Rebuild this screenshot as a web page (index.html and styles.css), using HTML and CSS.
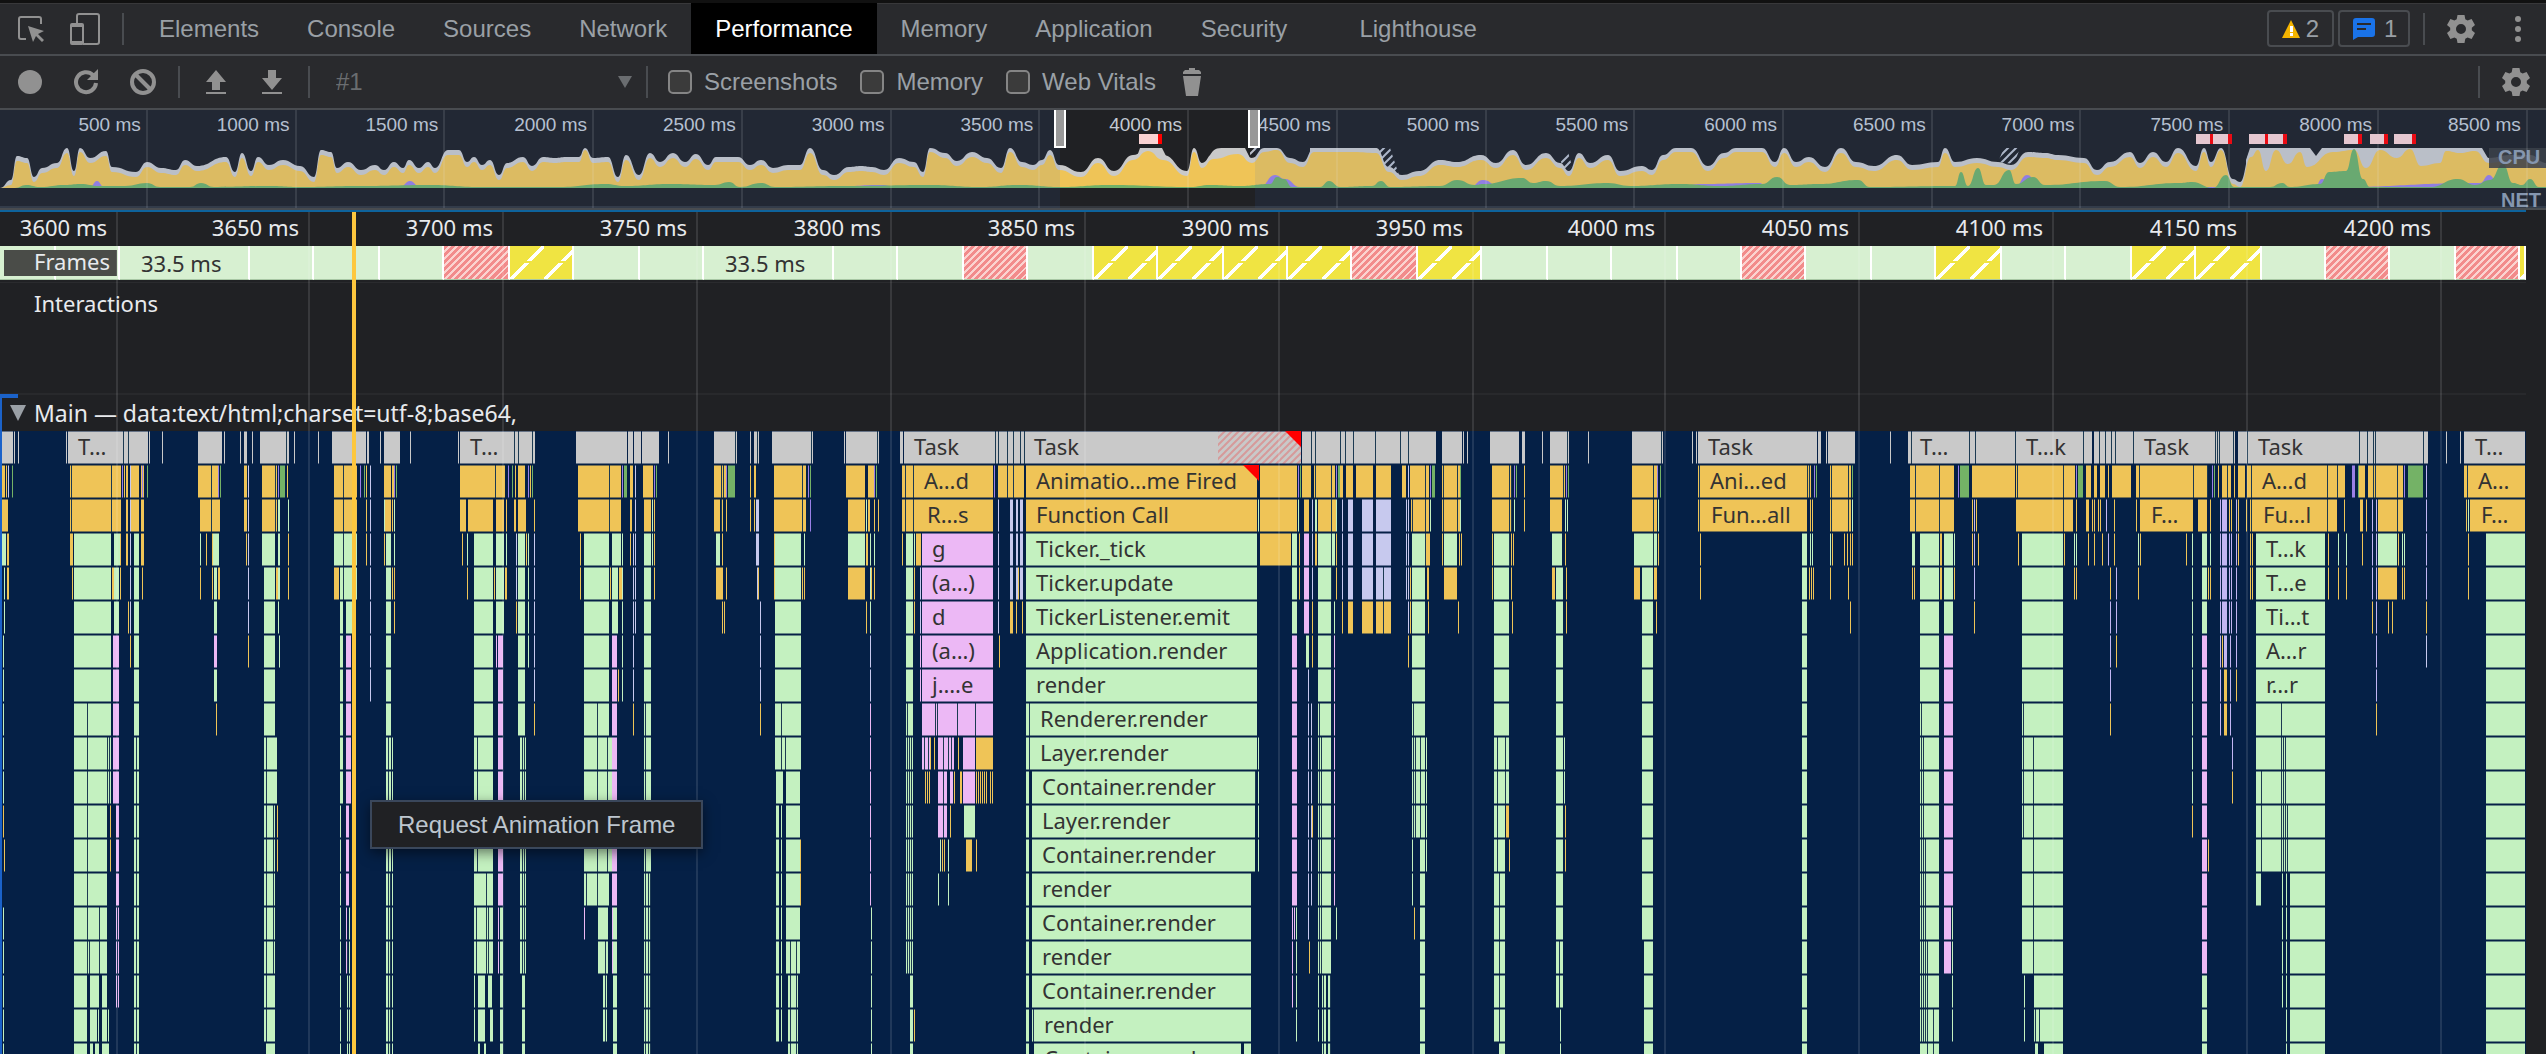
FILE: index.html
```html
<!DOCTYPE html>
<html lang="en">
<head>
<meta charset="utf-8">
<title>DevTools - Performance</title>
<link rel="stylesheet" href="styles.css">
</head>
<body>
<svg class="defs" aria-hidden="true">
  <symbol id="gear" viewBox="0 0 28 28"><path fill-rule="evenodd" d="M10.5 0h7l.8 4.2 2.3 1.3 4-1.4 3.4 6-3.2 2.7v2.4l3.2 2.7-3.4 6-4-1.4-2.3 1.3-.8 4.2h-7l-.8-4.2-2.3-1.3-4 1.4-3.4-6 3.2-2.7v-2.4L0 10.1l3.4-6 4 1.4 2.3-1.3zM14 9a5 5 0 1 0 0 10 5 5 0 0 0 0-10z"/></symbol>
  <pattern id="long" width="7" height="7" patternUnits="userSpaceOnUse"><rect width="7" height="7" fill="#c9c9c9"/><path d="M-1 8L8-1M-1 1L1-1M6 8L8 6" stroke="#d69a9a" stroke-width="2"/></pattern>
  <pattern id="idle" width="8" height="8" patternUnits="userSpaceOnUse"><path d="M-1 9L9-1M-1 1L1-1M7 9L9 7" stroke="#b9bfca" stroke-width="2"/></pattern>
</svg>

<header class="bar tabs-bar">
  <button class="icon" aria-label="Inspect"><svg width="26" height="26" viewBox="0 0 26 26"><path d="M23 8V3a2 2 0 0 0-2-2H3a2 2 0 0 0-2 2v18a2 2 0 0 0 2 2h5" fill="none" stroke="currentColor" stroke-width="2"/><path d="M10 10l16 5-6 3 6 6-2 2-6-6-3 6z"/></svg></button>
  <button class="icon device" aria-label="Device toolbar"><svg width="30" height="32" viewBox="0 0 30 32"><path d="M7 10V3a2 2 0 0 1 2-2h18a2 2 0 0 1 2 2v26a2 2 0 0 1-2 2H13" fill="none" stroke="currentColor" stroke-width="2"/><path fill-rule="evenodd" d="M2 10h10a2 2 0 0 1 2 2v18a2 2 0 0 1-2 2H2a2 2 0 0 1-2-2V12a2 2 0 0 1 2-2zM2 14v14h10V14z"/></svg></button>
  <span class="sep"></span>
  <nav class="tabs">
    <button>Elements</button><button>Console</button><button>Sources</button><button>Network</button><button class="active">Performance</button><button>Memory</button><button>Application</button><button>Security</button><button class="last">Lighthouse</button>
  </nav>
  <button class="badge"><svg width="18" height="18" viewBox="0 0 18 18"><path d="M9 0l9 18H0z" fill="#f4b400"/><path d="M8 6h3v6H8zM8 13h3v3H8z" fill="#fff"/></svg>2</button>
  <button class="badge issues"><svg width="22" height="22" viewBox="0 0 22 22"><path d="M3 0h16a3 3 0 0 1 3 3v13a3 3 0 0 1-3 3H5l-5 3V3a3 3 0 0 1 3-3z" fill="#1a73e8"/><path d="M4 6h14M4 11h9" stroke="#292a2d" stroke-width="2"/></svg>1</button>
  <span class="sep tight"></span>
  <button class="icon settings" aria-label="Settings"><svg width="28" height="28"><use href="#gear"/></svg></button>
  <button class="icon more" aria-label="More"><svg width="8" height="28" viewBox="0 0 8 28"><circle cx="4" cy="4" r="3"/><circle cx="4" cy="14" r="3"/><circle cx="4" cy="24" r="3"/></svg></button>
</header>

<div class="bar tools">
  <button class="icon" aria-label="Record"><svg width="24" height="24" viewBox="0 0 24 24"><circle cx="12" cy="12" r="12"/></svg></button>
  <button class="icon" aria-label="Reload"><svg width="24" height="26" viewBox="0 0 24 26"><path d="M22 14a10 10 0 1 1-3-8" fill="none" stroke="currentColor" stroke-width="4"/><path d="M24 0v11H13z"/></svg></button>
  <button class="icon" aria-label="Clear"><svg width="26" height="26" viewBox="0 0 26 26"><circle cx="13" cy="13" r="11" fill="none" stroke="currentColor" stroke-width="4"/><path d="M5 5l16 16" stroke="currentColor" stroke-width="4"/></svg></button>
  <span class="sep"></span>
  <button class="icon upload" aria-label="Load profile"><svg width="20" height="24" viewBox="0 0 20 24"><path d="M10 0l10 12h-6v8H6v-8H0zM0 22h20v2H0z"/></svg></button>
  <button class="icon download" aria-label="Save profile"><svg width="20" height="24" viewBox="0 0 20 24"><path d="M6 0h8v8h6L10 20 0 8h6zM0 22h20v2H0z"/></svg></button>
  <span class="sep"></span>
  <div class="history"><select aria-label="Recording" disabled><option>#1</option></select><svg width="14" height="12" viewBox="0 0 14 12"><path d="M0 0h14L7 12z"/></svg></div>
  <span class="sep"></span>
  <label><input type="checkbox">Screenshots</label>
  <label><input type="checkbox">Memory</label>
  <label><input type="checkbox">Web Vitals</label>
  <button class="icon trash" aria-label="Collect garbage"><svg width="18" height="28" viewBox="0 0 18 28"><path d="M0 6V4l2-2h4V0h6v2h4l2 2v2zM0 8h18l-3 20H3z"/></svg></button>
  <span class="sep end"></span>
  <button class="icon" aria-label="Capture settings"><svg width="28" height="28"><use href="#gear"/></svg></button>
</div>

<section class="overview" id="overview">
  <svg class="cpu" id="cpu" viewBox="0 0 2546 40" preserveAspectRatio="none"></svg>
  <span class="tag cpu-tag">CPU</span>
  <span class="tag net-tag">NET</span>
</section>

<main class="timeline" id="timeline">
  <div class="ruler"></div>
  <div class="frames" id="frames"></div>
  <div class="interactions">Interactions</div>
  <div class="main-head"><svg width="16" height="16" viewBox="0 0 16 16"><path d="M0 0h16L8 16z"/></svg>Main — data:text/html;charset=utf-8;base64,</div>
  <svg class="flame" id="flame"></svg>
  <span class="frames-tag">Frames</span>
  <span class="edge"></span>
  <span class="marker"></span>
</main>

<div class="menu" role="menu"><button role="menuitem">Request Animation Frame</button></div>
<script src="chart.js"></script>
</body>
</html>
```

FILE: styles.css
```css
* { box-sizing: border-box; }
body {
  margin: 0; height: 100vh; overflow: hidden; display: flex; flex-direction: column;
  background: #202124; color: #9aa0a6; font: 24px/28px "Liberation Sans", Arial, sans-serif;
}
button, select { font: inherit; color: inherit; background: none; border: 0; padding: 0; margin: 0; }
svg { display: block; fill: currentColor; flex: none; }
.defs { position: absolute; width: 0; height: 0; }

.bar { flex: none; display: flex; align-items: center; background: #292a2d; border-bottom: 2px solid #494c50; }
.tabs-bar { height: 56px; border-top: 3px solid #111; padding: 0 24px 0 18px; box-shadow: inset 0 1px #38383a; }
.tools { height: 54px; padding: 0 16px 0 18px; }
.icon { color: #919191; }
.sep { flex: none; width: 2px; height: 32px; background: #494c50; }
.device { margin: 0 22px 0 26px; }
.tabs { display: flex; align-self: stretch; flex: 1; margin-left: 11px; }
.tabs button { padding: 0 24px; }
.tabs .active { background: #000; color: #fff; }
.tabs .last { margin-left: 24px; }
.badge { display: flex; align-items: center; gap: 6px; height: 37px; padding: 0 13px; border: 2px solid #494c50; border-radius: 4px; }
.issues { margin-left: 4px; padding: 0 13px; gap: 9px; }
.tight { margin: 0 22px 0 13px; }
.more { margin-left: 39px; }
.badge + .badge { width: 72px; }

.tools > .icon + .icon { margin-left: 32px; }
.tools > .sep { margin-left: 22px; margin-right: 26px; }
.tools > .download.icon { margin-left: 36px; margin-right: 4px; }
.history { width: 296px; display: flex; align-items: center; justify-content: space-between; color: #6a6d70; }
.history select { appearance: none; color: #6a6d70; opacity: 1; }
.tools > .history + .sep { margin: 0 20px 0 14px; }
label { display: flex; align-items: center; gap: 12px; margin-right: 23px; }
input[type=checkbox] { appearance: none; width: 24px; height: 24px; margin: 0; border: 2px solid #858585; border-radius: 5px; background: #3b3b3b; }
.tools > .trash { margin-left: 4px; }
.tools > .sep.end { margin: 0 22px 0 auto; }
.tools > .sep.end + .icon { margin-left: 0; }

.overview { position: relative; flex: none; height: 100px; border-bottom: 2px solid #494c50; box-shadow: inset 0 -2px #33373d; font-size: 19px; line-height: 30px; color: #c3cad3; overflow: hidden; }
.tick { position: absolute; top: 0; bottom: 0; width: 148px; border-right: 2px solid rgba(255,255,255,.11); text-align: right; padding-right: 5px; transform: translateX(-100%); }
.cpu { position: absolute; left: 0; top: 38px; width: 100%; height: 40px; }
.shade { position: absolute; top: 0; bottom: 0; background: rgba(62,110,196,.1); }
.handle { position: absolute; top: -2px; width: 12px; height: 40px; border: 2px solid #fff; background: #999; }
.long { position: absolute; top: 24px; height: 10px; background: #f9d2d2; border-right: 4px solid #f00; }
.tag { position: absolute; right: 0; font-size: 20px; font-weight: 700; color: #8e9bad; }
.cpu-tag { top: 38px; height: 20px; line-height: 18px; width: 57px; padding-left: 9px; background: rgba(60,60,60,.85); }
.net-tag { top: 82px; line-height: 16px; width: 45px; }

.timeline { position: relative; flex: 1; min-height: 0; margin-right: 20px; border-top: 2px solid #0e639c; color: #e8eaed; font: 22px/28px "Noto Sans", sans-serif; display: flex; flex-direction: column; overflow: hidden; }
.ruler { flex: none; height: 34px; }
.timeline .tick { line-height: 30px; width: 194px; padding-right: 9px; border-color: rgba(255,255,255,.11); z-index: 1; }
.frames { flex: none; display: flex; height: 34px; background: #fff; }
.frame { border-right: 2px solid #fff; border-bottom: 1px solid #a8c7a4; background: #d7f0d1; color: #333; padding-left: 21px; line-height: 34px; }
.frame.drop { background: repeating-linear-gradient(135deg, #f28b8b 0 3px, #fbd3d0 3px 5px); }
.frame.part { background: linear-gradient(transparent 0 44%, #f0e442 44% 52%, transparent 52%), linear-gradient(135deg, #f0e442 0 46%, #fff 46% 54%, #f0e442 54%) 0 0 / 34px 34px; }
.frames-tag { position: absolute; left: 4px; top: 38px; height: 26px; width: 113px; padding-left: 30px; line-height: 22px; background: #4a4c48; }
.interactions { flex: none; height: 113px; margin-top: 2px; padding: 6px 0 0 34px; border-top: 1px solid #2a2b2e; border-bottom: 2px solid #28292c; }
.main-head { flex: none; height: 36px; display: flex; align-items: center; gap: 8px; padding-left: 10px; font-size: 23px; }
.main-head svg { color: #9aa0a6; }
.flame { width: 100%; height: 646px; background: #052046; }
.flame text { fill: #333; }
.edge { position: absolute; left: 0; top: 182px; bottom: 0; width: 2px; background: #1b62c9; }
.edge::before { content: ""; position: absolute; left: 0; top: 0; width: 18px; height: 4px; background: #1b62c9; }
.marker { position: absolute; left: 352px; top: 0; bottom: 0; width: 4px; background: #fdc73e; z-index: 2; }

.menu { position: absolute; left: 370px; top: 800px; padding: 8px 26px; border: 2px solid #3a475b; background: #202124; color: #bdc6cf; box-shadow: 0 4px 12px rgba(0,0,0,.5); z-index: 3; }
.menu button { display: block; height: 29px; }
```

FILE: chart.js
```js
const SVG = 'http://www.w3.org/2000/svg';
const SPAN = 2526, OVERVIEW = 2546, ROW = 34;
const pct = (v, total) => v / total * 100 + '%';

function el(parent, cls, left, text) {
  const node = document.createElement('span');
  node.className = cls;
  node.style.left = left;
  if (text) node.textContent = text;
  parent.append(node);
  return node;
}
function shape(parent, name, attrs, text) {
  const node = document.createElementNS(SVG, name);
  for (const k in attrs) node.setAttribute(k, attrs[k]);
  if (text) node.textContent = text;
  parent.append(node);
  return node;
}

/* Overview: CPU usage as "position height" samples, 40 is full load */
const busy = `0 0 11 3 17 27 27 25 34 6 42 15 57 20 67 35 74 12 80 36 90 25 106 32 112 16 136 11 147 21 161 15 176 13 185 23 197 17 226 26 235 11 242 30 251 12 258 26 269 18 283 23 300 17 314 6 321 33 331 31 337 15 348 21 361 13 375 18 384 13 394 21 403 15 409 23 419 15 428 21 435 15 448 33 459 33 467 21 474 26 482 18 490 23 499 8 507 20 523 26 532 17 543 26 555 25 566 26 579 26 585 38 593 25 608 26 618 6 626 28 639 8 650 30 660 21 673 30 685 21 696 29 708 18 716 26 738 26 750 18 761 23 773 15 788 18 800 18 810 35 823 13 834 8 849 16 861 17 872 16 884 13 899 25 914 21 923 11 930 36 945 30 957 22 972 31 987 25 1001 15 1010 36 1022 21 1033 18 1042 23 1050 33 1059 18 1081 11 1098 25 1114 12 1133 28 1148 37 1163 28 1187 12 1194 36 1202 20 1213 29 1238 34 1252 25 1264 36 1277 38 1290 25 1303 21 1314 36 1354 36 1376 35 1389 16 1402 8 1419 12 1440 23 1457 21 1481 28 1496 20 1513 33 1526 18 1546 30 1560 20 1569 12 1579 30 1590 20 1608 28 1620 12 1642 17 1652 13 1663 28 1676 36 1691 36 1708 17 1724 30 1736 36 1762 36 1775 21 1784 35 1796 21 1809 26 1825 16 1841 35 1856 21 1874 17 1897 28 1912 18 1938 21 1945 35 1955 21 1977 25 1998 21 2011 18 2028 31 2045 30 2058 28 2084 25 2097 13 2110 21 2130 31 2140 20 2153 31 2166 21 2178 35 2196 17 2204 36 2211 21 2221 38 2233 4 2240 1 2251 31 2258 38 2266 17 2276 38 2288 24 2300 36 2307 21 2333 36 2354 38 2366 20 2380 38 2397 30 2410 39 2421 22 2440 25 2446 37 2460 35 2475 37 2489 25 2510 28 2530 28 2546 20`;
const paint = `0 0 15 0 26 3 40 1 65 3 80 4 100 2 125 2 147 5 160 1 190 1 201 5 214 1 270 2 300 1 360 2 430 3 480 1 560 1 605 4 625 2 670 4 715 3 729 6 740 1 761 5 775 1 845 2 930 3 980 1 1020 3 1060 1 1110 3 1190 1 1210 3 1240 2 1270 4 1277 11 1284 9 1292 1 1320 1 1329 7 1340 1 1372 2 1381 7 1390 1 1440 2 1457 8 1475 3 1483 4 1522 10 1533 5 1546 7 1560 2 1608 5 1630 2 1680 4 1720 2 1762 4 1777 11 1790 3 1820 4 1858 8 1870 1 1955 2 1961 16 1968 2 1978 20 1986 3 1994 3 2009 18 2016 4 2033 11 2045 3 2105 7 2120 1 2180 5 2192 6 2213 0 2226 13 2234 1 2270 1 2282 5 2290 1 2320 4 2329 16 2346 17 2354 39 2363 9 2370 1 2430 1 2458 9 2475 3 2490 8 2503 24 2513 5 2522 3 2530 9 2539 1 2546 1`;
const script = `0 0 90 1 97 7 104 1 400 1 410 7 420 1 830 1 880 3 900 1 1260 1 1275 13 1285 9 1300 1 1470 1 1483 8 1500 1 1680 1 1700 4 1760 5 1766 0 2015 1 2027 13 2040 1 2315 1 2322 9 2335 1 2480 5 2489 13 2500 1 2546 1`;

function area(samples, lift) {
  const v = samples.split(' ').map(Number);
  const y = i => 40 - Math.min(40, v[i] ? v[i] + lift : 0);
  let d = `M0 40L${v[0]} ${y(1)}`;
  for (let i = 2; i < v.length; i += 2) {
    const mid = (v[i] + v[i - 2]) / 2;
    d += `C${mid} ${y(i - 1)} ${mid} ${y(i + 1)} ${v[i]} ${y(i + 1)}`;
  }
  return d + 'V40Z';
}
const cpu = document.getElementById('cpu');
const overview = document.getElementById('overview');
shape(cpu, 'path', { d: 'M1372 24V0H1390L1400 30 1390 26ZM1250 6V0H1257L1252 12ZM1560 12L1568 4 1572 18 1566 24ZM1998 14L2004 0H2020L2014 16Z', fill: 'url(#idle)' });
shape(cpu, 'path', { d: area(busy, 5), fill: '#c9c9c9' });
shape(cpu, 'path', { d: 'M1209 40V9C1214 0 1216 0 1224 0H1245L1250 10V40ZM1133 20L1140 0H1162L1170 16ZM1310 0H1370V20H1310ZM2246 12L2250 0H2310L2316 8 2322 0H2482L2489 12V30H2246Z', fill: '#c9c9c9' });
shape(cpu, 'path', { d: area(busy, 0), fill: '#efc457' });
shape(cpu, 'path', { d: area(script, 0), fill: '#9a80e6' });
shape(cpu, 'path', { d: area(paint, 0), fill: '#6fb068' });

for (let i = 1; i <= 17; i++) {
  el(overview, 'tick', pct(i * 148.75 - 1, OVERVIEW), i * 500 + ' ms');
}
for (const [a, b] of [[1139, 1162], [2196, 2214], [2213, 2232], [2249, 2269], [2268, 2287], [2344, 2362], [2370, 2388], [2394, 2416]]) {
  el(overview, 'long', pct(a, OVERVIEW)).style.width = pct(b - a, OVERVIEW);
}
el(overview, 'shade', 0).style.width = pct(1060, OVERVIEW);
el(overview, 'shade', pct(1255, OVERVIEW)).style.right = 0;
el(overview, 'handle', pct(1054, OVERVIEW));
el(overview, 'handle', pct(1248, OVERVIEW));

/* Detail ruler */
const timeline = document.getElementById('timeline');
[118, 310, 504, 698, 892, 1086, 1280, 1474, 1666, 1860, 2054, 2248, 2442].forEach((x, i) =>
  el(timeline, 'tick', pct(x, SPAN), 3600 + i * 50 + ' ms'));

/* Frames: end position, kind (d = dropped, p = partial), label */
const frames = [[56], [120], [250, '', '33.5 ms'], [314], [380], [444], [510, 'd'], [574, 'p'], [640], [704], [834, '', '33.5 ms'], [898], [964], [1028, 'd'], [1094], [1158, 'p'], [1224, 'p'], [1288, 'p'], [1352, 'p'], [1418, 'd'], [1482, 'p'], [1548], [1612], [1678], [1742], [1806, 'd'], [1872], [1936], [2002, 'p'], [2066], [2132], [2196, 'p'], [2262, 'p'], [2326], [2390, 'd'], [2456], [2520, 'd'], [2526, 'p']];
let start = 0;
for (const [end, kind, label] of frames) {
  const f = document.createElement('div');
  f.className = 'frame' + (kind === 'd' ? ' drop' : kind === 'p' ? ' part' : '');
  f.style.width = pct(end - start, SPAN);
  if (label) f.textContent = label; else f.style.padding = 0;
  document.getElementById('frames').append(f);
  start = end;
}

/* Flame chart. Each entry: x, width, first row, last row */
const bars = {
  '#c9c9c9': `2 11 0 0,14 1 0 0,18 1 0 0,66 1 0 0,68 80 0 0,149 1 0 0,162 1 0 0,198 24 0 0,224 1 0 0,240 1 0 0,244 3 0 0,252 1 0 0,260 29 0 0,294 1 0 0,318 1 0 0,332 34 0 0,367 2 0 0,380 1 0 0,384 16 0 0,410 1 0 0,458 1 0 0,460 75 0 0,576 51 0 0,628 5 0 0,634 7 0 0,642 17 0 0,668 1 0 0,714 23 0 0,750 1 0 0,754 5 0 0,772 41 0 0,844 1 0 0,846 33 0 0,900 3 0 0,904 122 0 0,1026 192 0 0,1302 134 0 0,1442 20 0 0,1463 1 0 0,1467 1 0 0,1490 29 0 0,1522 3 0 0,1542 1 0 0,1550 19 0 0,1588 1 0 0,1632 31 0 0,1692 1 0 0,1696 1 0 0,1698 119 0 0,1818 3 0 0,1826 1 0 0,1828 27 0 0,1890 1 0 0,1908 184 0 0,2094 141 0 0,2238 190 0 0,2446 1 0 0,2460 1 0 0,2464 61 0 0`,
  '#efc457': `2 3 1 1,6 1 1 1,2 6 2 2,7 2 3 4,70 51 1 2,124 1 1 1,126 2 1 3,131 8 1 2,141 3 1 3,70 3 3 3,72 1 4 4,112 2 4 4,120 1 3 4,128 1 5 5,142 1 4 4,130 1 6 6,110 1 11 12,3 1 11 11,4 1 12 12,198 20 1 1,200 20 2 2,206 1 3 3,212 1 3 4,218 2 4 4,200 1 4 4,216 1 8 8,244 3 1 2,246 1 3 3,248 1 6 6,262 15 1 1,287 1 1 1,262 15 2 2,288 1 3 4,276 2 4 4,277 1 11 12,334 23 1 2,334 5 4 4,366 1 1 3,384 7 1 1,392 2 1 1,385 6 2 2,392 1 2 2,384 1 3 3,392 1 4 4,394 1 4 5,392 1 11 13,460 45 1 1,460 6 2 2,468 25 2 2,496 8 2 2,506 1 2 2,515 1 1 1,518 7 1 1,514 2 2 2,518 8 2 2,534 1 2 2,530 1 1 1,526 1 3 3,462 1 3 3,467 1 4 4,494 1 4 4,505 2 4 4,516 1 5 5,534 1 8 8,578 43 1 2,630 3 1 1,630 2 2 2,580 1 3 4,610 1 4 4,619 3 4 4,630 1 3 3,618 1 7 7,611 1 12 12,633 1 8 8,643 10 1 1,644 7 2 2,654 1 2 4,714 12 1 1,714 6 2 2,722 1 2 5,726 1 2 2,726 1 4 4,716 6 4 4,750 1 1 2,754 2 1 1,754 1 2 2,758 1 4 4,760 1 8 8,724 1 5 5,774 32 1 1,774 32 2 2,774 1 3 4,802 1 4 4,804 1 4 4,800 1 12 13,846 19 1 1,868 6 1 1,848 17 2 2,868 2 2 2,874 1 2 2,878 1 2 2,866 2 3 3,848 17 4 4,871 1 4 4,874 1 4 4,866 1 5 5,902 91 1 1,998 26 1 1,902 91 2 2,902 1 3 3,916 5 3 3,914 1 4 5,1026 231 1 2,1260 37 1 2,1260 31 3 3,1018 1 4 4,1010 3 5 5,1016 1 5 5,1022 1 5 5,999 1 6 6,914 1 17 17,930 1 9 9,934 1 9 9,958 1 9 9,976 17 9 9,925 1 10 10,927 1 10 10,929 1 10 10,954 1 10 10,960 2 10 10,976 1 10 10,978 1 10 10,980 1 10 10,982 1 10 10,984 1 10 10,986 1 10 10,990 1 10 10,992 1 10 10,950 1 11 11,942 1 12 12,944 1 12 12,966 6 12 12,976 1 12 12,1299 1 3 4,1302 9 1 1,1314 21 1 1,1340 3 1 1,1346 7 1 1,1356 17 1 1,1376 15 1 1,1402 4 1 1,1410 19 1 1,1304 5 2 2,1312 1 2 2,1318 18 2 2,1315 2 3 3,1336 1 3 4,1348 5 5 5,1342 1 5 5,1362 11 5 5,1376 15 5 5,1312 1 5 6,1411 18 2 2,1426 4 3 3,1427 2 4 4,1428 1 5 5,1410 1 4 5,1408 1 6 6,1312 1 11 11,1309 1 15 15,1416 3 11 11,1414 1 14 14,1442 18 1 2,1442 1 3 3,1459 1 3 3,1461 1 3 3,1444 13 4 4,1458 1 5 5,1492 20 1 2,1492 1 3 4,1511 1 3 3,1513 1 3 3,1511 1 4 4,1512 1 5 5,1524 1 1 2,1506 3 11 11,1509 1 12 12,1550 15 1 1,1550 12 2 2,1565 1 3 3,1552 3 4 4,1566 1 4 5,1565 1 11 12,1632 25 1 1,1632 25 2 2,1658 1 3 3,1634 6 4 4,1654 3 4 4,1656 1 5 5,1698 113 1 1,1698 109 2 2,1810 1 2 2,1812 1 2 2,1700 1 3 4,1809 1 4 4,1811 1 4 4,1813 1 4 4,1830 21 1 2,1832 1 3 3,1844 1 3 3,1847 1 3 3,1850 1 3 3,1852 1 3 3,1830 1 4 4,1848 1 4 4,1850 1 5 5,1910 44 1 2,1972 43 1 1,2016 59 1 1,2086 5 1 1,2094 3 1 1,2100 5 1 1,2108 1 1 1,2112 19 1 1,2136 71 1 1,2218 1 1 1,2222 9 1 1,2234 1 1 1,2238 7 1 1,2247 98 1 1,2359 6 1 1,2368 35 1 1,2464 61 1 1,1940 2 3 4,1954 1 4 4,1912 1 4 4,1914 1 4 4,1972 1 2 3,1976 1 2 2,1978 1 3 3,1974 1 5 5,2016 57 2 2,2076 1 2 2,2086 3 2 2,2092 1 2 2,2094 1 2 3,2098 1 2 2,2100 1 2 2,2106 1 2 2,2114 1 2 3,2136 1 2 2,2140 53 2 2,2198 9 2 2,2210 1 2 2,2229 1 2 2,2231 1 2 2,2238 1 2 3,2246 1 2 2,2250 87 2 2,2344 1 2 2,2360 3 2 2,2366 1 2 2,2378 25 2 2,2466 1 2 2,2470 55 2 2,2018 1 3 3,2064 1 3 3,2088 1 3 3,2102 1 3 3,2140 1 3 3,2138 1 4 4,2186 1 3 3,2250 1 3 4,2252 1 3 4,2328 1 3 4,2338 1 4 4,2346 1 4 4,2362 1 3 3,2398 1 3 3,2378 19 4 4,2402 1 4 4,2404 1 4 4,2468 1 3 4,2074 1 4 4,2076 1 4 4,2110 1 4 4,2192 1 4 4,2208 1 4 4,2210 1 4 4,2222 1 5 6,2372 1 5 5,2388 1 5 5,2392 1 5 5,2426 1 5 5,1922 1 11 11,1924 1 11 11,2116 1 6 6,2110 1 8 8,2192 1 11 11,2208 1 12 12,2224 3 7 8,2236 1 7 7,2232 1 10 10,2376 1 8 8`,
  '#c4f1c0': `2 4 3 3,4 1 4 5,3 1 6 10,3 1 14 18,74 37 3 10,74 33 11 15,74 13 16 18,90 9 16 16,90 7 17 17,98 1 17 17,90 3 18 18,95 4 18 18,102 5 16 17,108 1 17 17,102 7 18 18,114 6 3 3,114 5 4 5,134 5 3 18,200 1 3 3,213 6 3 3,214 3 4 5,214 3 7 7,262 13 3 3,264 11 4 17,266 9 18 18,278 2 2 4,278 1 5 5,288 1 2 2,279 1 6 6,275 2 9 10,334 23 3 3,340 17 4 4,340 3 5 10,346 6 5 5,340 1 11 18,349 1 14 18,347 1 16 18,384 1 2 2,394 1 2 3,386 5 3 18,392 1 9 18,467 1 3 3,474 19 3 15,496 8 3 5,506 1 3 3,518 7 3 5,528 1 3 6,518 7 6 8,520 6 9 15,522 3 16 18,500 3 14 18,584 25 3 13,609 3 9 12,612 9 3 3,612 6 4 5,622 1 3 7,598 10 14 15,603 4 16 17,613 4 14 18,644 7 3 18,652 1 2 3,716 4 3 3,775 26 3 9,804 1 3 3,776 7 10 10,786 14 10 15,776 3 11 17,781 1 10 17,788 10 16 18,848 17 3 3,866 1 2 2,870 1 3 5,874 1 3 3,906 7 3 15,910 3 16 18,871 1 14 18,914 1 3 3,474 1 16 17,478 7 16 17,488 4 16 16,490 3 17 17,478 2 18 18,484 2 18 18,938 1 13 13,948 1 12 13,946 1 11 11,942 1 9 9,940 1 12 12,952 1 10 10,964 11 11 11,1026 231 3 6,1026 231 7 9,1026 3 10 18,1032 223 10 12,1258 1 9 12,1032 219 13 17,1034 207 18 18,1244 7 18 18,1258 1 2 2,1292 5 3 5,1296 1 14 17,1298 1 2 2,1306 3 6 6,1315 2 2 2,1318 13 3 15,1332 3 3 3,1334 1 5 5,1336 1 2 2,1318 1 16 17,1322 4 16 18,1328 3 16 18,1336 1 14 14,1412 13 3 11,1426 1 9 12,1412 1 12 13,1420 5 12 18,1430 1 2 2,1444 13 3 3,1460 1 2 2,1494 15 3 10,1494 11 11 17,1499 6 18 18,1514 1 2 2,1552 10 3 3,1556 7 4 16,1560 1 17 18,1564 1 9 10,1565 1 2 2,1567 1 2 2,1634 19 3 3,1642 11 4 14,1644 9 15 18,1654 3 3 3,1658 1 2 2,1802 5 3 18,1810 1 3 3,1812 1 3 3,1830 1 3 3,1852 1 2 2,1912 3 3 3,1920 19 3 18,1944 9 3 5,1954 1 3 3,1952 1 14 17,2022 41 3 15,2024 1 16 17,2034 29 16 17,2044 19 18 18,2035 3 18 18,2074 1 3 3,2076 1 3 3,2138 1 3 3,2192 1 3 10,2202 5 3 5,2210 1 3 3,2202 5 16 18,2256 69 3 12,2256 5 13 13,2282 1 13 16,2286 1 13 18,2290 35 13 18,2338 1 3 3,2346 1 3 3,2378 19 3 3,2402 1 3 3,2404 1 3 3,2468 1 2 2,2486 39 3 18`,
  '#ecb8f5': `113 6 6 10,116 3 11 13,116 1 14 16,118 1 14 16,214 3 6 6,346 5 6 10,346 3 11 13,346 1 14 15,496 1 6 6,498 5 6 13,498 1 14 15,612 5 6 13,584 1 14 14,612 1 14 15,922 71 3 8,870 1 8 13,920 1 5 7,922 8 9 9,938 16 9 9,963 12 9 10,938 9 10 11,950 3 10 10,1304 5 3 5,1292 5 6 13,1292 1 14 16,1294 1 14 14,1334 1 6 13,1944 9 6 13,1944 7 14 15,2202 5 6 15`,
  '#c7c9ee': `8 1 1 1,130 1 1 5,248 1 1 5,370 1 1 7,534 1 3 7,516 1 3 4,635 1 1 5,633 1 3 7,756 3 2 3,757 1 4 4,760 1 5 7,870 1 6 7,998 1 2 5,1010 3 2 4,1016 2 2 4,1020 3 2 4,920 1 4 5,1312 1 2 4,1342 1 2 4,1348 5 2 4,1362 11 2 4,1376 15 2 4,1406 1 2 4,1408 1 1 5,1308 1 7 14,1311 1 8 13,2426 1 6 6`,
  '#c2b5f2': `2220 1 2 5,2222 5 2 5,2229 1 3 5,2231 1 3 5,2236 1 2 6,2224 3 6 6,2220 1 6 8,2230 1 6 8,2232 1 9 9,2110 1 5 7,2116 1 4 5,2106 1 2 2,2108 1 3 3,1974 1 2 4,2372 1 2 4,2376 1 2 7,2426 1 1 4`,
  '#9a80e6': `122 1 1 1,142 1 1 1,218 1 1 1,278 1 1 1,360 1 1 1,394 1 1 1,508 1 1 1,528 1 1 1,622 1 1 1,654 1 1 1,726 1 1 1,808 1 1 1,810 1 2 2,874 1 1 1,994 1 1 1,1298 1 1 1,1336 1 1 1,1430 1 1 1,1514 1 1 1,1566 1 1 1,1657 1 1 1,1814 1 1 1,1958 1 1 1,2076 1 1 1,2212 1 1 1,2352 3 1 1,2404 1 1 1`,
  '#74b266': `12 1 1 1,147 1 1 1,220 1 1 1,280 5 1 1,364 1 1 1,396 1 1 1,512 1 1 1,532 1 1 1,624 3 1 1,656 1 1 1,728 7 1 1,810 1 1 1,876 1 1 1,1300 1 1 1,1338 2 1 1,1432 3 1 1,1460 1 1 1,1516 1 1 1,1568 1 1 1,1660 1 1 1,1816 1 1 1,1852 1 1 1,1960 9 1 1,2078 5 1 1,2214 1 1 1,2358 1 1 1,2408 15 1 1`
};
/* Hairlines between neighbouring calls: x, first row, last row */
const cuts = `123 0 0,128 0 0,286 0 0,514 0 0,518 0 0,532 0 0,71 1 2,111 1 2,211 1 1,211 2 2,275 1 2,343 1 4,495 1 1,609 1 2,721 1 2,723 1 1,735 0 0,757 0 0,802 1 2,811 0 0,877 0 0,995 0 0,998 0 0,1007 0 1,1013 0 1,1020 0 0,1024 0 0,905 1 2,913 1 2,1311 0 0,1315 0 1,1340 0 0,1345 0 0,1353 0 0,1375 0 0,1400 0 0,1408 0 0,1331 1 4,1425 1 3,1412 2 2,1383 4 5,1443 1 2,1457 1 2,1509 1 3,1511 1 2,1563 1 1,1567 0 0,1661 0 0,1653 1 3,1699 1 2,1807 1 1,1809 1 1,1831 1 2,1848 1 2,1911 0 0,1915 1 2,1939 1 2,1969 0 0,1975 0 0,2015 0 0,2017 1 1,2063 1 2,2083 0 0,2099 0 0,2105 0 0,2111 0 0,2115 0 0,2133 0 0,2139 1 1,2193 1 1,2207 1 1,2215 0 0,2217 0 0,2219 0 0,2233 0 0,2227 1 1,2247 0 0,2251 1 2,2327 1 2,2337 1 1,2359 0 0,2367 0 0,2373 0 1,2375 0 1,2423 0 0,2397 1 2,2467 1 1,
87 8 15,107 9 10,109 9 10,99 14 15,89 15 15,136 9 18,266 9 17,273 11 15,347 15 15,388 9 18,390 13 18,477 9 12,486 13 15,476 14 15,488 14 15,522 9 15,524 9 15,597 8 13,607 9 12,586 13 13,605 15 17,645 8 18,648 13 18,650 13 18,781 8 9,785 9 9,790 15 18,796 15 18,909 9 15,911 9 15,907 8 15,935 8 8,937 8 8,957 8 8,975 8 8,924 9 9,928 9 9,943 9 11,948 9 9,951 9 9,1029 8 9,1033 17 17,1255 10 10,1319 8 15,1321 9 15,1323 16 18,1330 16 18,1413 8 11,1415 9 11,1420 9 11,1497 9 12,1505 9 10,1499 13 17,1559 15 16,1921 8 17,1923 9 17,1925 12 17,1927 15 18,1933 17 18,2023 8 11,2033 9 15,2035 17 17,2039 17 17,2281 8 12,2283 9 12,2285 9 12,2287 11 12,2261 10 12`;
const labels = `0|78|T…;0|470|T…;0|914|Task;0|1034|Task;0|1708|Task;0|1920|T…;0|2026|T…k;0|2144|Task;0|2258|Task;0|2475|T…;1|924|A…d;1|1036|Animatio…me Fired;1|1710|Ani…ed;1|2262|A…d;1|2478|A…;2|927|R…s;2|1036|Function Call;2|1711|Fun…all;2|2151|F…;2|2263|Fu…l;2|2481|F…;3|932|g;3|1036|Ticker._tick;3|2266|T…k;4|932|(a…);4|1036|Ticker.update;4|2266|T…e;5|932|d;5|1036|TickerListener.emit;5|2266|Ti…t;6|932|(a…);6|1036|Application.render;6|2266|A…r;7|932|j.…e;7|1036|render;7|2266|r…r;8|1040|Renderer.render;9|1040|Layer.render;10|1042|Container.render;11|1042|Layer.render;12|1042|Container.render;13|1042|render;14|1042|Container.render;15|1042|render;16|1042|Container.render;17|1044|render;18|1044|Container.render`;

const flame = document.getElementById('flame');
function rect(x, w, y, h, fill) {
  shape(flame, 'rect', { x: pct(x, SPAN), width: pct(w, SPAN), y, height: h, fill, 'shape-rendering': 'crispEdges' });
}
for (const fill in bars) {
  for (const item of bars[fill].split(',')) {
    const [x, w, from, to] = item.trim().split(' ').map(Number);
    for (let r = from; r <= to; r++) rect(x, w, r * ROW, ROW - 1, fill);
  }
}
for (const item of cuts.split(',')) {
  const [x, from, to] = item.trim().split(' ').map(Number);
  rect(x, 1, from * ROW, (to - from + 1) * ROW, '#1c3a52');
}
rect(1218, 83, 0, ROW - 1, 'url(#long)');
for (let r = 0; r < 19; r++) {
  rect(0, SPAN, r * ROW, 1, 'rgba(5,32,70,.5)');
  rect(0, SPAN, r * ROW + 32, 1, 'rgba(5,32,70,.5)');
  rect(0, SPAN, r * ROW + 33, 1, '#052046');
}
/* Long-task corners */
for (const [x, y] of [[1301, 0], [1259, ROW]]) {
  const s = shape(flame, 'svg', { x: pct(x, SPAN), y, overflow: 'visible' });
  shape(s, 'path', { d: 'M-16 0H0V16Z', fill: '#f00' });
}
for (const item of labels.split(';')) {
  const [r, x, text] = item.split('|');
  shape(flame, 'text', { x: pct(x, SPAN), y: r * ROW + 24 }, text);
}
```
